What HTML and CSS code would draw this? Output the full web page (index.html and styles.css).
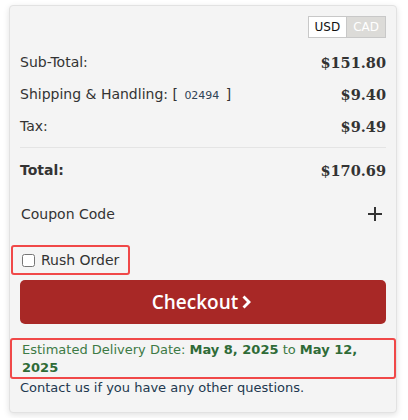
FILE: index.html
```html
<!DOCTYPE html>
<html lang="en">
<head>
    <meta charset="UTF-8">
    <title>Cart Summary</title>
    <link rel="stylesheet" href="styles.css">
</head>
<body>
    <div class="summary">
        <div class="currency">
            <span class="cur active">USD</span>
            <span class="cur">CAD</span>
        </div>

        <div class="row">
            <span>Sub-Total:</span>
            <span class="price">$151.80</span>
        </div>
        <div class="row">
            <span>Shipping &amp; Handling: [ <small class="zip">02494</small> ]</span>
            <span class="price">$9.40</span>
        </div>
        <div class="row">
            <span>Tax:</span>
            <span class="price">$9.49</span>
        </div>

        <div class="row total">
            <span>Total:</span>
            <span class="price">$170.69</span>
        </div>

        <div class="coupon">
            <span>Coupon Code</span>
            <svg class="plus" width="14" height="14" viewBox="0 0 14 14"><path d="M6 0h2v6h6v2H8v6H6V8H0V6h6z" fill="#333"/></svg>
        </div>

        <label class="rush">
            <input type="checkbox" class="rush-check">
            Rush Order
        </label>

        <button class="checkout">Checkout
            <svg class="chev" width="12" height="16" viewBox="0 0 12 16"><path d="M2.5 1.5 L0.5 3.5 L5 8 L0.5 12.5 L2.5 14.5 L9 8 Z" fill="#fff"/></svg>
        </button>

        <div class="delivery">
            <span>Estimated Delivery Date:</span> <b>May 8, 2025</b> <span>to</span> <b>May 12,</b><br><b>2025</b>
        </div>
        <p class="contact">Contact us if you have any other questions.</p>
    </div>
</body>
</html>
```

FILE: styles.css
```css
body {
    margin: 0;
    padding: 5px 9px;
    background-color: #fff;
    font-family: "DejaVu Sans", Verdana, sans-serif;
}

.summary {
    width: 366px;
    padding: 10px 10px 15px;
    background-color: #f4f4f4;
    border: 1px solid #e2e2e2;
    border-radius: 4px;
    box-shadow: 0 2px 6px rgba(0, 0, 0, 0.12);
    color: #333;
}

.currency {
    display: flex;
    justify-content: flex-end;
    margin-bottom: 8px;
}

.cur {
    font-size: 12px;
    line-height: 20px;
    padding: 0 6px;
    border: 1px solid #c8c8c8;
    background-color: #fff;
    color: #111;
}

.cur + .cur {
    border-left: none;
    background-color: #dcdbd8;
    color: #fff;
}

.row {
    display: flex;
    justify-content: space-between;
    align-items: center;
    height: 32px;
    font-size: 14px;
}

.zip {
    font-size: 11px;
    color: #2f4356;
    padding: 0 2px;
}

.price {
    font-family: "DejaVu Serif", Georgia, serif;
    font-weight: bold;
    font-size: 14.5px;
}

.total {
    margin-top: 5px;
    padding-top: 6px;
    border-top: 1px solid #e4e4e4;
    font-weight: bold;
}

.coupon {
    display: flex;
    justify-content: space-between;
    align-items: center;
    height: 38px;
    margin-top: 9px;
    padding: 0 4px 0 1px;
    font-size: 14px;
}

.rush {
    display: inline-flex;
    align-items: center;
    gap: 6px;
    margin: 12px 0 0 -9px;
    padding: 5px 9px;
    border: 2px solid #f04848;
    border-radius: 3px;
    font-size: 14px;
}

.rush-check {
    margin: 0;
    width: 13px;
    height: 13px;
}

.checkout {
    display: flex;
    justify-content: center;
    align-items: center;
    gap: 4px;
    width: 100%;
    height: 44px;
    margin-top: 5px;
    border: none;
    border-radius: 5px;
    background-color: #a82826;
    color: #fff;
    font-family: "Open Sans", sans-serif;
    font-weight: 600;
    font-size: 19px;
}

.delivery {
    margin: 14px -10px 0;
    padding: 1px 10px 0;
    border: 2px solid #f04848;
    border-radius: 3px;
    color: #3d7a45;
    font-size: 13px;
    line-height: 18px;
}

.delivery b {
    color: #2f6b37;
}

.contact {
    margin: 0;
    font-size: 13px;
    line-height: 18px;
    color: #22384f;
}
```
